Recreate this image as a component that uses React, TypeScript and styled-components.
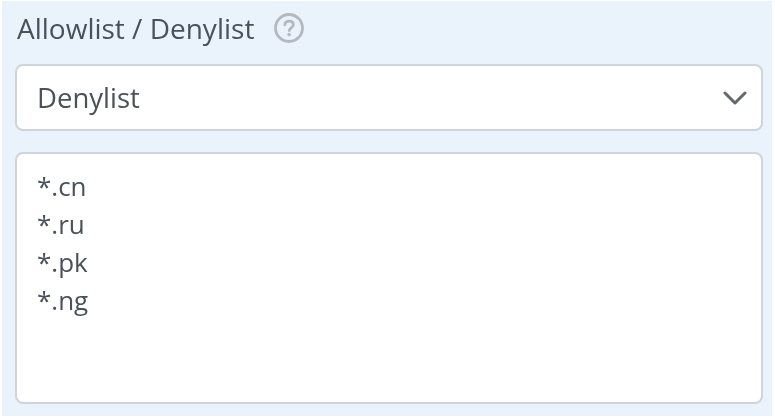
import React from "react";
import styled, { createGlobalStyle } from "styled-components";

const GlobalStyle = createGlobalStyle`
  html, body {
    margin: 0;
    padding: 0;
    background: #ffffff;
  }
`;

const hosts = ["*.cn", "*.ru", "*.pk", "*.ng"];

function HelpIcon() {
  return (
    <svg width="32" height="32" viewBox="0 0 32 32" fill="none">
      <circle cx="16" cy="16" r="13.5" stroke="#b4b9be" strokeWidth="2.8" />
      <path
        d="M11.8 12.8c.3-2.3 2-3.7 4.3-3.7 2.4 0 4.2 1.4 4.2 3.6 0 3-3.9 3.2-4.1 6"
        stroke="#b4b9be"
        strokeWidth="2.8"
        strokeLinecap="round"
      />
      <circle cx="16.1" cy="22.6" r="1.8" fill="#b4b9be" />
    </svg>
  );
}

function ChevronIcon() {
  return (
    <svg width="24" height="16" viewBox="0 0 24 16" fill="none">
      <path d="M2 3l10 10L22 3" stroke="#63686d" strokeWidth="3" strokeLinecap="round" strokeLinejoin="round" />
    </svg>
  );
}

function App() {
  return (
    <>
      <GlobalStyle />
      <Page>
        <Panel>
          <LabelRow>
            <Label>Allowlist / Denylist</Label>
            <HelpIcon />
          </LabelRow>
          <Select>
            <span>Denylist</span>
            <ChevronIcon />
          </Select>
          <HostList>
            {hosts.map(host => (
              <div key={host}>{host}</div>
            ))}
          </HostList>
        </Panel>
      </Page>
    </>
  );
}

const Page = styled.div`
  width: 775px;
  height: 419px;
  padding: 1px 3px 3px 2px;
  box-sizing: border-box;
  overflow: hidden;
  background: #ffffff;
  filter: blur(0.7px);
`;

const Panel = styled.div`
  height: 100%;
  box-sizing: border-box;
  padding: 0 9px 0 13px;
  background: #eaf2fc;
  font-family: "Open Sans", "Liberation Sans", sans-serif;
  color: #4a5158;
`;

const LabelRow = styled.div`
  height: 63px;
  box-sizing: border-box;
  padding-bottom: 9px;
  display: flex;
  align-items: center;
  gap: 19px;
`;

const Label = styled.div`
  font-size: 28px;
  padding-left: 2px;
`;

const Select = styled.div`
  height: 67px;
  box-sizing: border-box;
  display: flex;
  align-items: center;
  justify-content: space-between;
  padding: 0 14px 0 20px;
  background: #ffffff;
  border: 2px solid #cfd4da;
  border-radius: 8px;
  font-size: 27.5px;
`;

const HostList = styled.div`
  height: 252px;
  box-sizing: border-box;
  margin-top: 21px;
  padding: 13px 20px;
  background: #ffffff;
  border: 2px solid #cfd4da;
  border-radius: 8px;
  font-size: 26px;
  line-height: 38px;
`;

export default App;
